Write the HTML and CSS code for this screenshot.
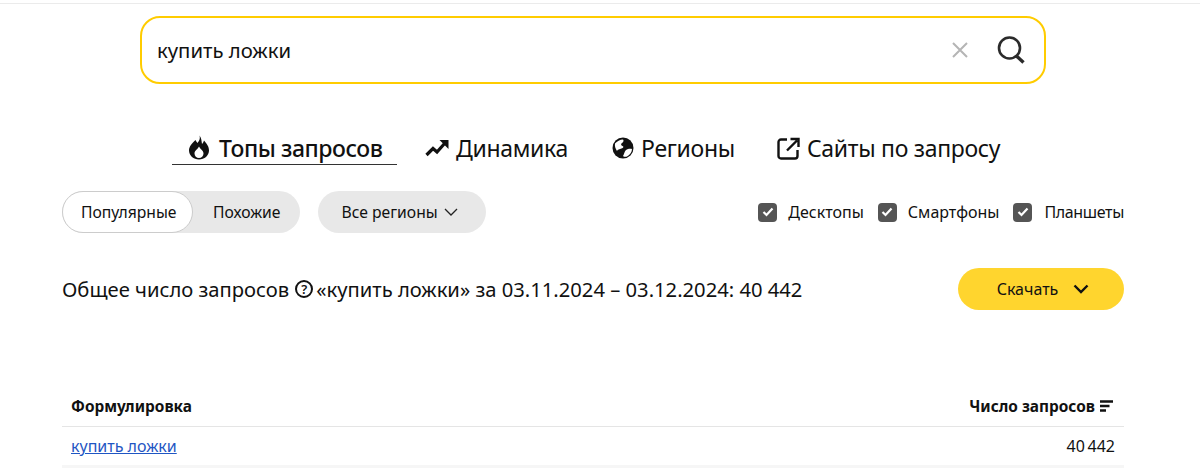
FILE: index.html
```html
<!DOCTYPE html>
<html lang="ru">
<head>
    <meta charset="UTF-8">
    <title>Топы запросов</title>
    <link rel="stylesheet" href="styles.css">
</head>
<body>
    <div class="top-line"></div>

    <div class="search">
        <span class="search-text">купить ложки</span>
        <svg class="search-clear" width="18" height="18" viewBox="0 0 18 18"><path d="M2 2l14 14M16 2L2 16" stroke="#b5b5b5" stroke-width="2" fill="none"/></svg>
        <svg class="search-icon" width="30" height="30" viewBox="0 0 30 30"><circle cx="13.5" cy="13" r="10.5" stroke="#2b2b2b" stroke-width="2.6" fill="none"/><path d="M20.5 21l7 6.5" stroke="#2b2b2b" stroke-width="3.4" fill="none"/></svg>
    </div>

    <div class="tabs">
        <div class="tab tab-active">
            <svg width="22" height="25" viewBox="0 0 22 24"><path d="M11.5 0c1 3.500-.5 5.500-2 7.500C8.500 6.500 8 5.500 7.500 4.500 4 8 1 11 1 15c0 5 4.500 9 10 9s10-4 10-9c0-5-3.500-8-5-10-.5 1.500-1 2.500-2 3.500C13.500 5.500 13.500 2.500 11.500 0zM11 22.500c-2.500 0-4.500-2-4.500-4.500 0-3 3-4 4.500-7 1.500 3 4.500 4 4.500 7 0 2.500-2 4.500-4.500 4.500z" fill="#111" fill-rule="evenodd"/></svg>
            <span class="tab-bold">Топы запросов</span>
        </div>
        <div class="tab tab-dyn">
            <svg width="24" height="18" viewBox="0 0 24 18"><path d="M1.500 16l6.500-6.500 4 3.500 8-9" stroke="#111" stroke-width="3.200" fill="none"/><path d="M14.500 1h9v9z" fill="#111"/></svg>
            <span>Динамика</span>
        </div>
        <div class="tab tab-reg">
            <svg width="22" height="22" viewBox="0 0 22 22"><circle cx="11" cy="11" r="10.500" fill="#111"/><path d="M3 6.500c2-2 5-4 8-4 1 1 .5 2.500-1 3.500-1.500 1-1 2.500.5 3 1.500.5 1 2-1 2.500-2 .5-4 1-4.500 2.500C3.500 12 2.500 9 3 6.500zM14 13c1.500-1 4-1.500 6-1 0 3-2 6-5 7.500-1.500.5-3 .5-4-.5 1-1.500 1.500-4.500 3-6z" fill="#fff"/></svg>
            <span>Регионы</span>
        </div>
        <div class="tab tab-sites">
            <svg width="23" height="23" viewBox="0 0 23 23"><path d="M10 2.500H4A2.500 2.500 0 0 0 1.500 5v14A2.500 2.500 0 0 0 4 21.500h14a2.500 2.500 0 0 0 2.500-2.500v-6" stroke="#111" stroke-width="2.400" fill="none"/><path d="M10 13.500L20 3.500M13.500 2h8v8" stroke="#111" stroke-width="2.400" fill="none"/></svg>
            <span>Сайты по запросу</span>
        </div>
    </div>

    <div class="filters">
        <div class="switch">
            <div class="switch-item switch-on">Популярные</div>
            <div class="switch-item">Похожие</div>
        </div>
        <div class="regions">
            Все регионы
            <svg width="14" height="8" viewBox="0 0 14 8"><path d="M1 1l6 6 6-6" stroke="#222" stroke-width="1.300" fill="none"/></svg>
        </div>
        <div class="devices">
            <label class="device"><span class="check"><svg width="12" height="10" viewBox="0 0 12 10"><path d="M1.500 5l3 3 6-6.500" stroke="#fff" stroke-width="2.200" fill="none"/></svg></span>Десктопы</label>
            <label class="device"><span class="check"><svg width="12" height="10" viewBox="0 0 12 10"><path d="M1.500 5l3 3 6-6.500" stroke="#fff" stroke-width="2.200" fill="none"/></svg></span>Смартфоны</label>
            <label class="device device-last"><span class="check"><svg width="12" height="10" viewBox="0 0 12 10"><path d="M1.500 5l3 3 6-6.500" stroke="#fff" stroke-width="2.200" fill="none"/></svg></span>Планшеты</label>
        </div>
    </div>

    <div class="total">
        <div class="total-text">
            <span>Общее число запросов</span>
            <span class="help">?</span>
            <span>«купить ложки» за 03.11.2024 – 03.12.2024: 40 442</span>
        </div>
        <div class="download">
            Скачать
            <svg width="16" height="10" viewBox="0 0 16 10"><path d="M1.500 1.500L8 8l6.500-6.500" stroke="#111" stroke-width="2.400" fill="none"/></svg>
        </div>
    </div>

    <div class="table">
        <div class="row row-head">
            <span>Формулировка</span>
            <span class="count-head">Число запросов
                <svg width="13" height="12" viewBox="0 0 13 12"><path d="M0 1.500h13M0 6h9.500M0 10.500h6" stroke="#111" stroke-width="2.400" fill="none"/></svg>
            </span>
        </div>
        <div class="row">
            <a class="query" href="#">купить ложки</a>
            <span class="count">40 442</span>
        </div>
        <div class="row-next"></div>
    </div>
</body>
</html>
```
FILE: styles.css
```css
body {
    font-family: 'Noto Sans', 'Open Sans', sans-serif;
    color: #111;
    background: #fff;
    margin: 0;
    height: 468px;
    overflow: hidden;
}

.top-line {
    height: 1px;
    margin-top: 3px;
    background: #ebebeb;
}

.search {
    display: flex;
    align-items: center;
    box-sizing: border-box;
    width: 906px;
    height: 68px;
    margin: 12px 0 0 140px;
    padding: 0 18px 0 15px;
    border: 2px solid #fc0;
    border-radius: 20px;
}

.search-text {
    flex: 1;
    font-size: 20.3px;
}

.search-clear {
    margin-right: 27px;
}

.tabs {
    display: flex;
    align-items: center;
    margin: 47px 0 0 172px;
    font-size: 23px;
    letter-spacing: -0.3px;
}

.tab {
    display: flex;
    align-items: center;
    gap: 7px;
    height: 34px;
}

.tab-active {
    box-sizing: border-box;
    gap: 9px;
    width: 225px;
    padding-left: 16px;
    border-bottom: 1px solid #333;
}

.tab-bold {
    font-weight: 500;
    letter-spacing: -0.45px;
}

.tab-dyn {
    margin-left: 28px;
}

.tab-reg {
    margin-left: 44px;
}

.tab-sites {
    margin-left: 42px;
}

.filters {
    display: flex;
    align-items: center;
    margin: 26px 76px 0 62px;
    font-size: 15.7px;
}

.switch {
    display: flex;
    height: 42px;
    border-radius: 21px;
    background: #e8e8e8;
}

.switch-item {
    display: flex;
    align-items: center;
    padding: 0 19px 0 20px;
}

.switch-on {
    box-sizing: border-box;
    width: 131px;
    padding: 0 0 0 18px;
    background: #fff;
    border: 1px solid #ccc;
    border-radius: 21px;
}

.regions {
    display: flex;
    align-items: center;
    gap: 6px;
    height: 42px;
    margin-left: 18px;
    padding: 0 28px 0 24px;
    border-radius: 21px;
    background: #e8e8e8;
}

.devices {
    display: flex;
    gap: 14px;
    margin-left: auto;
    font-size: 16px;
}

.device {
    display: flex;
    align-items: center;
    gap: 11px;
}

.device-last {
    gap: 12px;
    letter-spacing: -0.35px;
}

.check {
    display: flex;
    align-items: center;
    justify-content: center;
    width: 19px;
    height: 19px;
    border-radius: 4px;
    background: #555;
}

.total {
    display: flex;
    align-items: center;
    justify-content: space-between;
    margin: 35px 76px 0 62px;
    font-size: 20.2px;
}

.total-text {
    display: flex;
    align-items: center;
}

.help {
    display: flex;
    align-items: center;
    justify-content: center;
    box-sizing: border-box;
    width: 18px;
    height: 18px;
    margin: 0 3px 0 6px;
    border: 2px solid #111;
    border-radius: 50%;
    font-size: 13px;
    font-weight: 600;
}

.download {
    display: flex;
    align-items: center;
    justify-content: center;
    gap: 15px;
    box-sizing: border-box;
    width: 166px;
    height: 42px;
    padding-left: 4px;
    border-radius: 21px;
    background: #ffd52e;
    font-size: 16px;
}

.table {
    margin: 76px 76px 0 62px;
    font-size: 16px;
}

.row {
    display: flex;
    align-items: center;
    justify-content: space-between;
    height: 38px;
    padding: 0 9px;
}

.row-head {
    height: 40px;
    border-bottom: 1px solid #e5e5e5;
    font-weight: 700;
    font-size: 15.4px;
}

.count-head {
    display: flex;
    align-items: center;
    gap: 5px;
    padding-right: 2px;
}

.query {
    color: #1f56c3;
}

.count {
    word-spacing: -1.5px;
}

.row-next {
    height: 3px;
    background: #f6f6f6;
}
```
